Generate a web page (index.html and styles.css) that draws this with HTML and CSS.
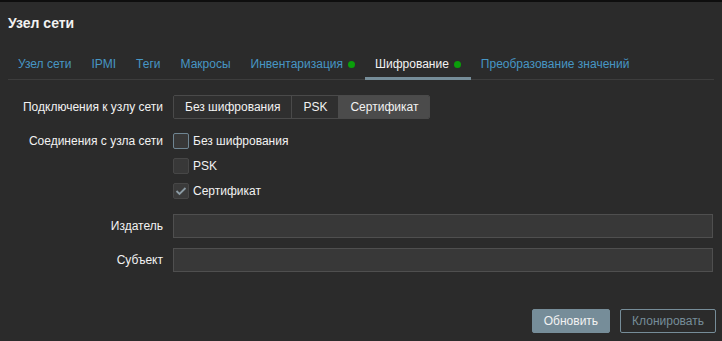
FILE: index.html
```html
<!DOCTYPE html>
<html lang="ru">
<head>
<meta charset="utf-8">
<title>Узел сети</title>
<link rel="stylesheet" href="styles.css">
</head>
<body>
<div class="topbar"></div>
<div class="dialog">
  <div class="head"><h4 class="title">Узел сети</h4></div>
  <ul class="tabs">
    <li class="tab"><a class="tab-link">Узел сети</a></li>
    <li class="tab"><a class="tab-link">IPMI</a></li>
    <li class="tab"><a class="tab-link">Теги</a></li>
    <li class="tab"><a class="tab-link">Макросы</a></li>
    <li class="tab"><a class="tab-link">Инвентаризация<span class="dot"></span></a></li>
    <li class="tab active"><a class="tab-link">Шифрование<span class="dot"></span></a></li>
    <li class="tab"><a class="tab-link">Преобразование значений</a></li>
  </ul>
  <div class="form">
    <div class="row row-seg">
      <label class="lbl lbl-24">Подключения к узлу сети</label>
      <div class="field">
        <ul class="seg">
          <li class="seg-item">Без шифрования</li>
          <li class="seg-item">PSK</li>
          <li class="seg-item selected">Сертификат</li>
        </ul>
      </div>
    </div>
    <div class="row row-checks">
      <label class="lbl lbl-16">Соединения с узла сети</label>
      <ul class="checks">
        <li class="check"><span class="box focus"></span>Без шифрования</li>
        <li class="check"><span class="box"></span>PSK</li>
        <li class="check"><span class="box checked"><svg width="12" height="10" viewBox="0 0 12 10"><polyline points="1.5,5 4.5,8 10.5,2" fill="none" stroke="#8b9ba4" stroke-width="1.8"/></svg></span>Сертификат</li>
      </ul>
    </div>
    <div class="row row-input">
      <label class="lbl lbl-24">Издатель</label>
      <input class="input" type="text">
    </div>
    <div class="row row-input2">
      <label class="lbl lbl-24">Субъект</label>
      <input class="input" type="text">
    </div>
  </div>
  <div class="footer">
    <button class="btn">Обновить</button>
    <button class="btn btn-alt">Клонировать</button>
  </div>
</div>
</body>
</html>
```

FILE: styles.css
```css
html, body {
  margin: 0;
  padding: 0;
  background: #2b2b2b;
  color: #f2f2f2;
  font-family: "Liberation Sans", Arial, sans-serif;
  font-size: 12px;
}

.topbar {
  height: 2px;
  background: #0e0e0e;
}

.head {
  padding: 13px 8px 0;
}

.title {
  margin: 0;
  font-size: 14px;
  line-height: 16px;
  font-weight: bold;
  color: #f2f2f2;
}

.tabs {
  list-style: none;
  margin: 18px 8px 0;
  padding: 0;
  display: flex;
  border-bottom: 1px solid #3d3d3d;
}

.tab {
  margin-bottom: -1px;
  padding: 8px 10px 6px;
  border-bottom: 3px solid transparent;
  line-height: 14px;
}

.tab-link {
  color: #4796c4;
  white-space: nowrap;
}

.tab.active {
  border-bottom-color: #768d99;
}

.tab.active .tab-link {
  color: #f2f2f2;
}

.dot {
  display: inline-block;
  width: 7px;
  height: 7px;
  border-radius: 50%;
  background: #0a9e0a;
  margin-left: 5px;
}

.form {
  margin-top: 15px;
}

.row {
  display: grid;
  grid-template-columns: 155px 1fr;
  column-gap: 10px;
  padding: 0 9px 0 8px;
}

.row-checks { margin-top: 14px; }
.row-input { margin-top: 15px; }
.row-input2 { margin-top: 10px; }

.lbl {
  text-align: right;
  color: #f2f2f2;
  white-space: nowrap;
}

.lbl-24 { line-height: 24px; }
.lbl-16 { line-height: 16px; }

.seg {
  list-style: none;
  margin: 0;
  padding: 0;
  display: inline-flex;
  border: 1px solid #4a4a4a;
  border-radius: 2px;
  overflow: hidden;
}

.seg-item {
  padding: 0 11px;
  line-height: 22px;
  background: #2f2f2f;
  border-left: 1px solid #4a4a4a;
}

.seg-item:first-child {
  border-left: none;
}

.seg-item.selected {
  background: #4b4b4b;
  border-left-color: #4b4b4b;
}

.checks {
  list-style: none;
  margin: 0;
  padding: 0;
  display: flex;
  flex-direction: column;
  gap: 9px;
}

.check {
  display: flex;
  align-items: center;
  gap: 4px;
  line-height: 16px;
}

.box {
  box-sizing: border-box;
  width: 16px;
  height: 16px;
  border: 1px solid #474747;
  border-radius: 2px;
  background: #383838;
  display: flex;
  align-items: center;
  justify-content: center;
}

.box.focus {
  border-color: #6f8592;
}

.box.checked {
  background: #3a3a3a;
}

.input {
  box-sizing: border-box;
  height: 24px;
  width: 100%;
  margin: 0;
  background: #383838;
  border: 1px solid #4f4f4f;
  border-radius: 0;
  color: #f2f2f2;
  font: inherit;
  padding: 0 5px;
}

.footer {
  display: flex;
  justify-content: flex-end;
  gap: 10px;
  margin-top: 37px;
  padding-right: 6px;
}

.btn {
  box-sizing: border-box;
  height: 24px;
  padding: 0 11px;
  border: 1px solid #768d99;
  border-radius: 2px;
  background: #768d99;
  color: #f2f2f2;
  font-family: "Liberation Sans", Arial, sans-serif;
  font-size: 12px;
}

.btn-alt {
  background: transparent;
  color: #768d99;
}
```
